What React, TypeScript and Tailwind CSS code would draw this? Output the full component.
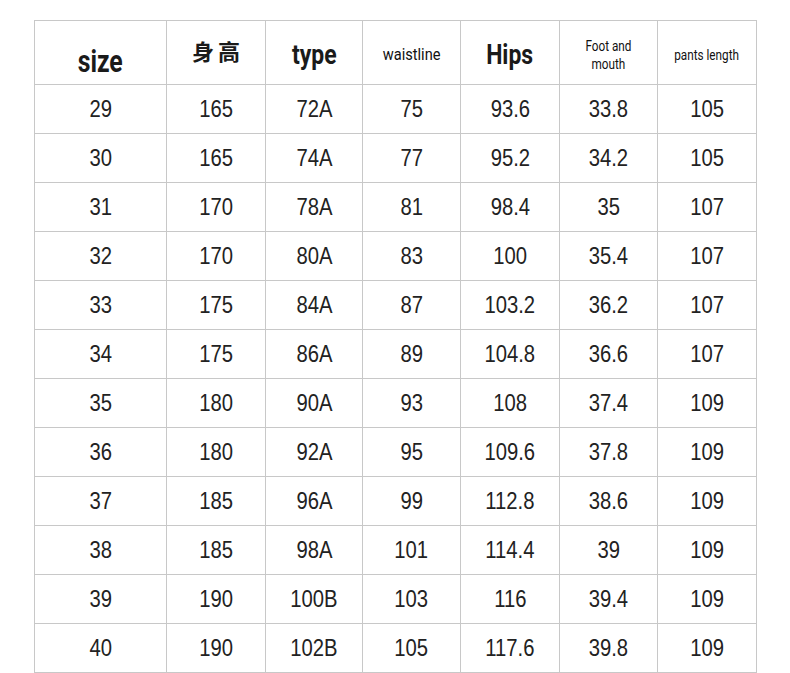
const rows = [
  ["29", "165", "72A", "75", "93.6", "33.8", "105"],
  ["30", "165", "74A", "77", "95.2", "34.2", "105"],
  ["31", "170", "78A", "81", "98.4", "35", "107"],
  ["32", "170", "80A", "83", "100", "35.4", "107"],
  ["33", "175", "84A", "87", "103.2", "36.2", "107"],
  ["34", "175", "86A", "89", "104.8", "36.6", "107"],
  ["35", "180", "90A", "93", "108", "37.4", "109"],
  ["36", "180", "92A", "95", "109.6", "37.8", "109"],
  ["37", "185", "96A", "99", "112.8", "38.6", "109"],
  ["38", "185", "98A", "101", "114.4", "39", "109"],
  ["39", "190", "100B", "103", "116", "39.4", "109"],
  ["40", "190", "102B", "105", "117.6", "39.8", "109"],
];

const widths = ["w-[132px]", "w-[99px]", "w-[97px]", "w-[98px]", "w-[99px]", "w-[98px]", "w-[99px]"];

const App = () => {
  return (
    <div className="w-[790px] h-[673px] bg-white pt-[20px] pl-[34px]">
      <table className="table-fixed border-collapse text-[#1a1a1a]">
        <colgroup>
          {widths.map((w, i) => (
            <col key={i} className={w} />
          ))}
        </colgroup>
        <thead>
          <tr className="h-[64px] font-['Roboto',sans-serif] font-medium">
            <th className="border border-[#c8c8c8] p-0 pt-[19px]">
              <span className="inline-block scale-x-[0.8] text-[31px] leading-none">size</span>
            </th>
            <th className="border border-[#c8c8c8] p-0">
              <span className="inline-block text-[22px] leading-none font-bold font-['Noto_Sans_CJK_SC',sans-serif] tracking-[4px] pl-[4px]">
                身高
              </span>
            </th>
            <th className="border border-[#c8c8c8] p-0 pt-[7px]">
              <span className="inline-block scale-x-[0.82] text-[28px] leading-none">type</span>
            </th>
            <th className="border border-[#c8c8c8] p-0 pt-[5px]">
              <span className="inline-block scale-x-[0.86] text-[17px] leading-none font-normal text-[#111]">waistline</span>
            </th>
            <th className="border border-[#c8c8c8] p-0 pt-[6px]">
              <span className="inline-block scale-x-[0.82] text-[28px] leading-none">Hips</span>
            </th>
            <th className="border border-[#c8c8c8] p-0 pt-[8px]">
              <span className="inline-block scale-x-[0.84] text-[14px] leading-[18px] font-normal text-[#111]">
                Foot and
                <br />
                mouth
              </span>
            </th>
            <th className="border border-[#c8c8c8] p-0 pt-[4px]">
              <span className="inline-block scale-x-[0.84] text-[14px] leading-none font-normal text-[#111]">pants length</span>
            </th>
          </tr>
        </thead>
        <tbody className="font-['Liberation_Sans',sans-serif]">
          {rows.map((r, i) => (
            <tr key={i} className="h-[49px]">
              {r.map((c, j) => (
                <td key={j} className="border border-[#c8c8c8] p-0 pt-[3px] text-center">
                  <span className="inline-block scale-x-[0.88] text-[23px] leading-none text-[#222]">{c}</span>
                </td>
              ))}
            </tr>
          ))}
        </tbody>
      </table>
    </div>
  );
};

export default App;
